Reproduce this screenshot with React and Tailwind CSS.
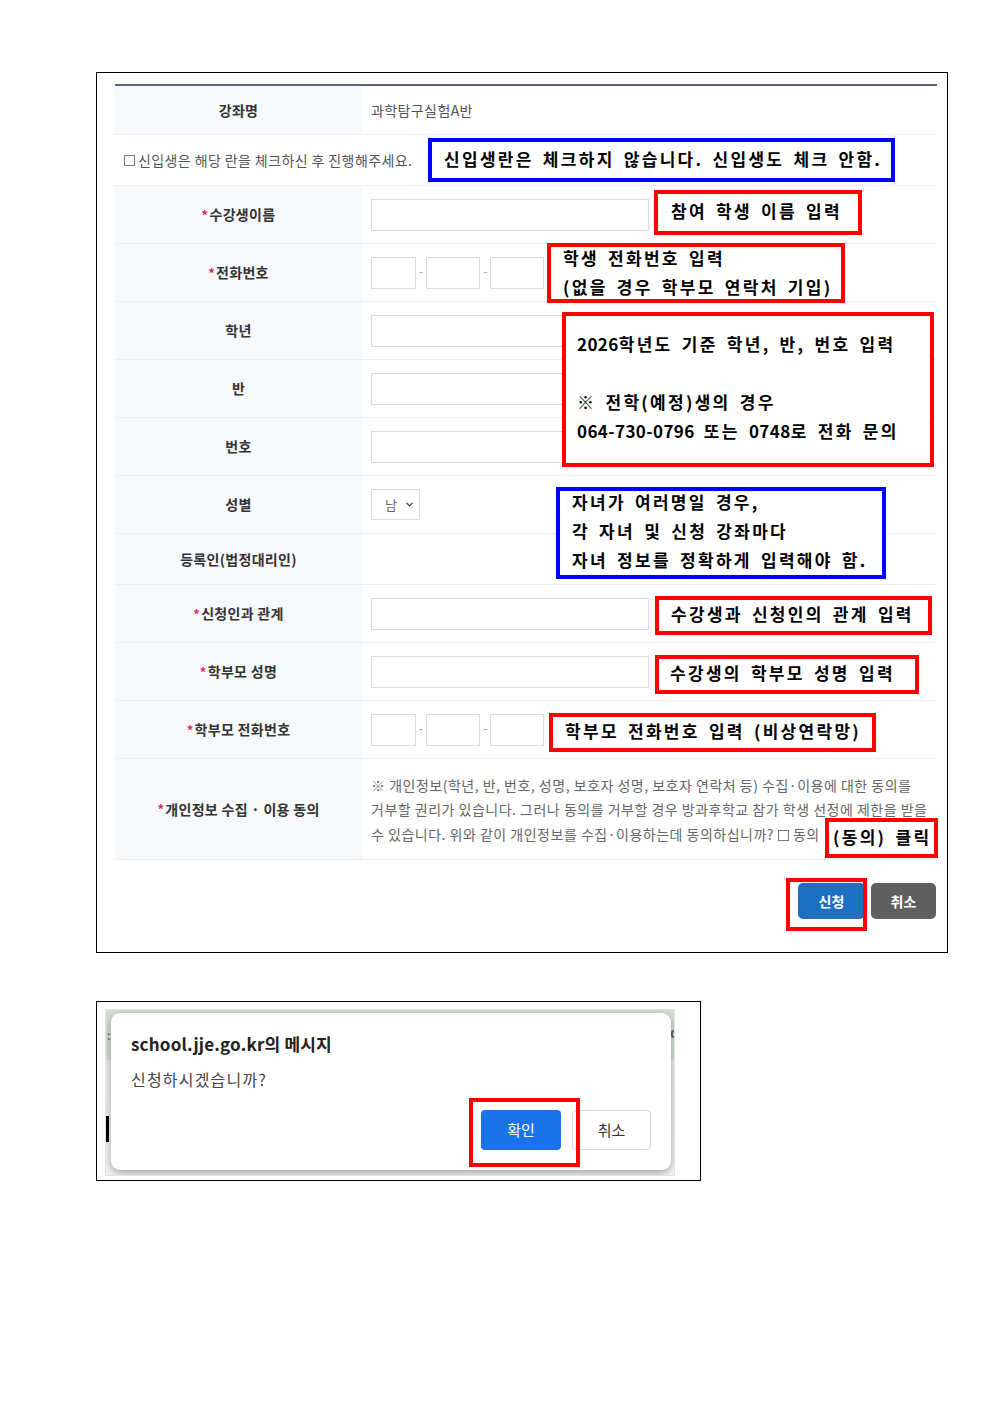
import { ChevronDown } from 'lucide-react';

const KR = "font-['Noto_Sans_CJK_KR','Noto_Sans',sans-serif]";

// callout boxes drawn over the form
const Note = ({ className, children, color = 'red', shift = '' }) => (
  <div
    className={`absolute border-[4px] bg-white text-[17px] font-bold leading-[29px] text-black tracking-[2.3px] [word-spacing:3px] ${
      color === 'red' ? 'border-[#ff0000]' : 'border-[#0000ff]'
    } ${className}`}
  >
    <div className={shift}>{children}</div>
  </div>
);

// digits in the callouts run tighter than the hangul
const Num = ({ children }) => <span className="tracking-[0.4px]">{children}</span>;

const Label = ({ req, children }) => (
  <div className="flex h-full items-center justify-center bg-[#f7f8fa] text-[14px] font-bold text-[#333] tracking-[0.3px]">
    {req && <span className="mr-[1px] text-[13px] text-[#e5245b]">*</span>}
    {children}
  </div>
);

const TextBox = () => <div className="h-[32px] w-[278px] border border-[#dcdcdc] bg-white" />;

const Phone = () => (
  <div className="flex items-center">
    <div className="h-[32px] w-[45px] border border-[#dcdcdc]" />
    <span className="mx-[3px] -mt-[4px] text-[12px] text-[#999]">-</span>
    <div className="h-[32px] w-[54px] border border-[#dcdcdc]" />
    <span className="mx-[3px] -mt-[4px] text-[12px] text-[#999]">-</span>
    <div className="h-[32px] w-[54px] border border-[#dcdcdc]" />
  </div>
);

const Row = ({ h, label, req, children }) => (
  <div className="grid grid-cols-[247px_1fr] border-b border-[#eceef1]" style={{ height: h }}>
    <Label req={req}>{label}</Label>
    <div className="flex items-center pl-[9px]">{children}</div>
  </div>
);

export default function App() {
  return (
    <div className={`min-h-[1403px] w-[992px] bg-white pt-[72px] pl-[96px] ${KR}`}>
      {/* application form */}
      <div className="relative h-[881px] w-[852px] border border-black">
        <div className="ml-[18px] mr-[10px] mt-[11px] border-t-2 border-[#5b6577]">
          <div className="grid h-[49px] grid-cols-[247px_1fr] border-b border-[#eceef1]">
            <Label>강좌명</Label>
            <div className="flex items-center pl-[9px] text-[14px] text-[#555] tracking-[0.4px]">과학탐구실험A반</div>
          </div>
          <div className="flex h-[51px] items-center border-b border-[#eceef1] pl-[9px] text-[14px] text-[#555] tracking-[0.4px]">
            <span className="mr-[3px] inline-block h-[11px] w-[11px] border border-[#777]" />
            신입생은 해당 란을 체크하신 후 진행해주세요.
          </div>
          <Row h={58} label="수강생이름" req>
            <TextBox />
          </Row>
          <Row h={58} label="전화번호" req>
            <Phone />
          </Row>
          <Row h={58} label="학년">
            <TextBox />
          </Row>
          <Row h={58} label="반">
            <TextBox />
          </Row>
          <Row h={58} label="번호">
            <TextBox />
          </Row>
          <Row h={58} label="성별">
            <div className="flex h-[31px] w-[49px] items-center justify-between border border-[#dcdcdc] pl-[13px] pr-[4px] text-[13px] text-[#666]">
              남
              <ChevronDown size={11} strokeWidth={3} className="text-[#444]" />
            </div>
          </Row>
          <Row h={51} label="등록인(법정대리인)" />
          <Row h={58} label="신청인과 관계" req>
            <TextBox />
          </Row>
          <Row h={58} label="학부모 성명" req>
            <TextBox />
          </Row>
          <Row h={58} label="학부모 전화번호" req>
            <Phone />
          </Row>
          <Row h={101} label="개인정보 수집 · 이용 동의" req>
            <div className="whitespace-nowrap pt-[1px] text-[14px] leading-[24.5px] text-[#666] tracking-[0.5px]">
              <div>※ 개인정보(학년, 반, 번호, 성명, 보호자 성명, 보호자 연락처 등) 수집·이용에 대한 동의를</div>
              <div>거부할 권리가 있습니다. 그러나 동의를 거부할 경우 방과후학교 참가 학생 선정에 제한을 받을</div>
              <div>
                수 있습니다. 위와 같이 개인정보를 수집·이용하는데 동의하십니까?
                <span className="mx-[4px] inline-block h-[11px] w-[11px] border border-[#777] align-[-1px]" />
                동의
              </div>
            </div>
          </Row>
        </div>

        <div className="mr-[11px] mt-[23px] flex justify-end gap-[6px]">
          <button className="h-[36px] w-[67px] rounded-[5px] bg-[#1d6fc2] text-[14px] font-bold text-white">신청</button>
          <button className="h-[36px] w-[65px] rounded-[5px] bg-[#5f5f5f] text-[14px] font-bold text-white">취소</button>
        </div>

        <Note color="blue" className="left-[331px] top-[65px] h-[44px] w-[467px] pl-[12px] pt-[2px]">
          신입생란은 체크하지 않습니다. 신입생도 체크 안함.
        </Note>
        <Note className="left-[557px] top-[117px] h-[45px] w-[208px] pl-[13px] pt-[2px]">참여 학생 이름 입력</Note>
        <Note className="left-[450px] top-[170px] h-[60px] w-[298px] pl-[12px]" shift="-mt-[4px]">
          학생 전화번호 입력
          <br />
          (없을 경우 학부모 연락처 기입)
        </Note>
        <Note className="left-[465px] top-[239px] h-[155px] w-[372px] pl-[11px] pt-[13px]">
          <Num>2026</Num>학년도 기준 학년, 반, 번호 입력
          <br />
          <br />※ 전학(예정)생의 경우
          <br />
          <Num>064-730-0796</Num> 또는 <Num>0748</Num>로 전화 문의
        </Note>
        <Note color="blue" className="left-[459px] top-[414px] h-[92px] w-[330px] pl-[12px]" shift="-mt-[4px]">
          자녀가 여러명일 경우,
          <br />각 자녀 및 신청 강좌마다
          <br />
          자녀 정보를 정확하게 입력해야 함.
        </Note>
        <Note className="left-[558px] top-[523px] h-[39px] w-[277px] pl-[12px]" shift="-mt-[1px]">
          수강생과 신청인의 관계 입력
        </Note>
        <Note className="left-[558px] top-[582px] h-[39px] w-[264px] pl-[11px]" shift="-mt-[1px]">
          수강생의 학부모 성명 입력
        </Note>
        <Note className="left-[452px] top-[640px] h-[39px] w-[327px] pl-[12px]" shift="-mt-[1px]">
          학부모 전화번호 입력 (비상연락망)
        </Note>
        <Note className="left-[728px] top-[745px] h-[40px] w-[113px] pl-[4px]">(동의) 클릭</Note>
        <div className="absolute left-[689px] top-[805px] h-[53px] w-[81px] border-[4px] border-[#ff0000]" />
      </div>

      {/* browser confirm dialog */}
      <div className="mt-[48px] h-[180px] w-[605px] border border-black pl-[8px] pt-[7px]">
        <div className="relative h-[167px] w-[570px] overflow-hidden border border-[#e2e2e2] bg-[linear-gradient(#cfe2d1_0px,#cfe2d1_50px,#ececec_50px,#f6f6f6_100%)] pl-[5px] pt-[3px]">
          <span className="absolute left-[1px] top-[18px] text-[12px] leading-[14px] text-[#555]">:</span>
          <div className="absolute right-[0px] top-[20px] h-[8px] w-[3px] rounded-l-full border-2 border-r-0 border-[#666]" />
          <div className="absolute left-[-1px] top-[106px] h-[26px] w-[4px] bg-black" />
          <div className="relative h-[157px] w-[560px] rounded-[9px] bg-white px-[20px] pt-[19px] shadow-[0_3px_8px_rgba(0,0,0,0.35)]">
            <div className="text-[17px] font-bold leading-[24px] text-[#222] tracking-[0.2px]">school.jje.go.kr의 메시지</div>
            <div className="mt-[12px] text-[16px] leading-[22px] text-[#444] tracking-[1.2px]">신청하시겠습니까?</div>
            <div className="mt-[20px] flex justify-end gap-[11px]">
              <button className="h-[40px] w-[80px] rounded-[4px] bg-[#1a73e8] text-[15px] text-white">확인</button>
              <button className="h-[40px] w-[79px] rounded-[4px] border border-[#d6d6d6] bg-white text-[15px] text-[#333]">취소</button>
            </div>
            <div className="absolute left-[358px] top-[85px] h-[69px] w-[111px] border-[4px] border-[#ff0000]" />
          </div>
        </div>
      </div>
    </div>
  );
}
